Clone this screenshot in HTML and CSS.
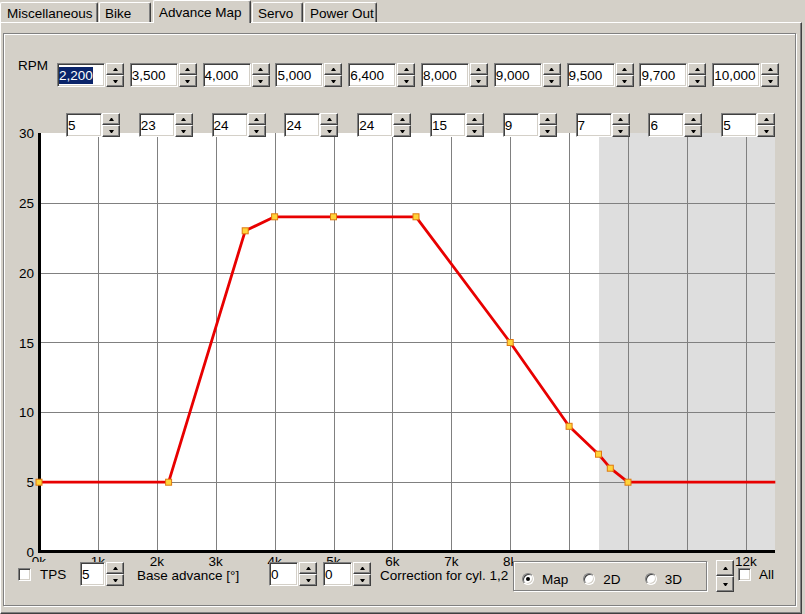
FILE: index.html
```html
<!DOCTYPE html>
<html lang="en">

<head>
  <meta charset="UTF-8">
  <title>Advance Map</title>
  <link rel="stylesheet" href="styles.css">
</head>

<body>
  <div class="tabs">
    <div class="tab tab-misc">Miscellaneous</div>
    <div class="tab tab-bike">Bike</div>
    <div class="tab tab-active">Advance Map</div>
    <div class="tab tab-servo">Servo</div>
    <div class="tab tab-power">Power Out</div>
  </div>

  <div class="page">
    <div class="group">
      <div class="rpm-row">
        <span class="rpm-label">RPM</span>
        <div class="rpm-grid" id="rpmGrid"></div>
      </div>

      <div class="advance-grid" id="advanceGrid"></div>

      <svg class="chart" id="chart" width="791" height="444" viewBox="4 126 791 444"></svg>

      <div class="bottom-row">
        <label class="check tps"><span class="box"></span>TPS</label>
        <div class="spin spin-base">
          <span class="field">5</span>
          <span class="updown"><span class="btn"><i class="arrow up"></i></span><span class="btn"><i class="arrow down"></i></span></span>
        </div>
        <span class="caption caption-base">Base advance [°]</span>
        <div class="spin spin-corr">
          <span class="field">0</span>
          <span class="updown"><span class="btn"><i class="arrow up"></i></span><span class="btn"><i class="arrow down"></i></span></span>
        </div>
        <div class="spin spin-corr spin-corr2">
          <span class="field">0</span>
          <span class="updown"><span class="btn"><i class="arrow up"></i></span><span class="btn"><i class="arrow down"></i></span></span>
        </div>
        <span class="caption caption-corr">Correction for cyl. 1,2</span>
        <div class="view-group">
          <div class="view-frame">
            <label class="radio-item"><span class="radio checked"></span>Map</label>
            <label class="radio-item"><span class="radio"></span>2D</label>
            <label class="radio-item"><span class="radio"></span>3D</label>
          </div>
        </div>
        <span class="updown updown-tall"><span class="btn"><i class="arrow up"></i></span><span class="btn"><i class="arrow down"></i></span></span>
        <label class="check all"><span class="box"></span>All</label>
      </div>
    </div>
  </div>

  <script>
    const rpm = [2200, 3500, 4000, 5000, 6400, 8000, 9000, 9500, 9700, 10000];
    const advance = [5, 23, 24, 24, 24, 15, 9, 7, 6, 5];
    const shadeFrom = 9500;

    const updownHtml = '<span class="updown"><span class="btn"><i class="arrow up"></i></span>' +
      '<span class="btn"><i class="arrow down"></i></span></span>';

    function spinner(value, cls) {
      const el = document.createElement('div');
      el.className = 'spin ' + cls;
      el.innerHTML = `<span class="field">${value}</span>` + updownHtml;
      return el;
    }

    const rpmGrid = document.getElementById('rpmGrid');
    const advanceGrid = document.getElementById('advanceGrid');
    rpm.forEach((r, i) => {
      const text = r.toLocaleString('en-US');
      rpmGrid.appendChild(spinner(i === 0 ? `<span class="sel">${text}</span>` : text, 'spin-rpm'));
      advanceGrid.appendChild(spinner(advance[i], 'spin-adv'));
    });

    // chart, drawn in page pixels (viewBox starts at the group's inner corner)
    const svg = document.getElementById('chart');
    const NS = 'http://www.w3.org/2000/svg';
    const plotL = 39, plotR = 775, plotT = 133, plotB = 552;
    const pxPerK = 58.9, pxPerDeg = 13.967;
    const sx = r => plotL + r / 1000 * pxPerK;
    const sy = d => plotB - d * pxPerDeg;

    function add(tag, attrs, text) {
      const el = document.createElementNS(NS, tag);
      for (const k in attrs) el.setAttribute(k, attrs[k]);
      if (text !== undefined) el.textContent = text;
      svg.appendChild(el);
      return el;
    }

    add('rect', { x: plotL, y: plotT, width: plotR - plotL, height: plotB - plotT, fill: '#fff' });
    const shadeX = Math.round(sx(shadeFrom));
    add('rect', { x: shadeX, y: plotT, width: plotR - shadeX, height: plotB - plotT, fill: '#dedede' });

    for (let k = 1; k <= 12; k++) {
      const x = Math.round(sx(k * 1000)) + 0.5;
      add('line', { x1: x, y1: plotT, x2: x, y2: plotB, class: 'grid' });
    }
    for (let d = 5; d < 30; d += 5) {
      const y = Math.round(sy(d)) + 0.5;
      add('line', { x1: plotL, y1: y, x2: plotR, y2: y, class: 'grid' });
    }

    add('rect', { x: 38, y: plotT, width: 3, height: plotB - plotT + 1, fill: '#000' });
    add('rect', { x: 38, y: 550, width: plotR - 38, height: 3, fill: '#000' });

    const points = [[0, 5], ...rpm.map((r, i) => [r, advance[i]])];
    const line = [...points, [12500, 5]].map(([r, d]) => `${sx(r).toFixed(1)},${sy(d).toFixed(1)}`).join(' ');
    add('polyline', { points: line, class: 'curve' });
    points.forEach(([r, d]) => {
      add('rect', { x: (sx(r) - 3).toFixed(1), y: (sy(d) - 3).toFixed(1), width: 6, height: 6, class: 'marker' });
    });

    for (let d = 0; d <= 30; d += 5) {
      add('text', { x: 34, y: (sy(d) + 5).toFixed(1), 'text-anchor': 'end' }, d);
    }
    for (let k = 0; k <= 12; k++) {
      add('text', { x: sx(k * 1000).toFixed(1), y: 566, 'text-anchor': 'middle' }, k + 'k');
    }
  </script>
</body>

</html>
```

FILE: styles.css
```css
body {
  margin: 0;
  background: #d4d0c8;
  font: 13.5px "Liberation Sans", Arial, sans-serif;
  color: #000;
}

/* tab strip */
.tabs {
  display: flex;
  align-items: flex-end;
  height: 22px;
}

.tab {
  box-sizing: border-box;
  height: 20px;
  margin-left: 1px;
  padding: 3px 0 0 5px;
  line-height: 15px;
  white-space: nowrap;
  background: #d4d0c8;
  border-top: 1px solid #fff;
  border-left: 1px solid #fff;
  border-right: 1px solid #404040;
  border-radius: 2px 2px 0 0;
  box-shadow: inset -1px 0 #808080;
}

.tab-misc {
  width: 98px;
  margin-left: 0;
  padding-left: 6px;
}

.tab-bike {
  width: 52px;
}

.tab-active {
  position: relative;
  z-index: 1;
  width: 98px;
  height: 23px;
  margin: 0 0 -1px 2px;
  padding-top: 4px;
}

.tab-servo {
  width: 51px;
}

.tab-power {
  width: 73px;
}

.page {
  box-sizing: border-box;
  width: 802px;
  height: 592px;
  border: 1px solid;
  border-color: #fff #404040 #404040 #fff;
  box-shadow: inset -1px -1px #808080;
}

.group {
  box-sizing: border-box;
  width: 793px;
  height: 573px;
  margin: 10px 0 0 2px;
  border: 1px solid #808080;
  box-shadow: inset 1px 1px #fff, 1px 1px #fff;
}

/* spin edits */
.spin {
  display: flex;
  height: 24px;
}

.field {
  box-sizing: border-box;
  display: flex;
  align-items: center;
  height: 24px;
  padding-left: 1px;
  overflow: hidden;
  white-space: nowrap;
  background: #fff;
  border: 1px solid;
  border-color: #808080 #fff #fff #808080;
  box-shadow: inset 1px 1px #404040, inset -1px -1px #d4d0c8;
}

.sel {
  padding: 1px 0;
  background: #0a246a;
  color: #fff;
}

.updown {
  display: flex;
  flex-direction: column;
  width: 18px;
  margin-left: 1px;
}

.btn {
  box-sizing: border-box;
  flex: 1;
  display: flex;
  align-items: center;
  justify-content: center;
  background: #d4d0c8;
  border: 1px solid;
  border-color: #fff #404040 #404040 #fff;
  box-shadow: inset -1px -1px #808080;
}

.arrow {
  width: 1px;
  height: 0;
  border-left: 2px solid transparent;
  border-right: 2px solid transparent;
}

.arrow.up {
  border-bottom: 3px solid #000;
}

.arrow.down {
  border-top: 3px solid #000;
}

.spin-rpm .field {
  width: 48px;
}

.spin-adv .field {
  width: 36px;
}

.spin-adv .updown {
  margin-left: 0;
}

.rpm-row {
  display: flex;
  align-items: flex-start;
  margin: 24px 0 0 14px;
}

.rpm-label {
  width: 39px;
  line-height: 15px;
}

.rpm-grid,
.advance-grid {
  display: grid;
  grid-template-columns: repeat(10, 72.8px);
}

.rpm-grid {
  margin-top: 5px;
}

.advance-grid {
  position: relative;
  z-index: 1;
  margin: 26px 0 -11px 62px;
}

/* chart */
.chart {
  display: block;
}

.chart text {
  font-family: "Liberation Sans", Arial, sans-serif;
  font-size: 13.5px;
  fill: #000;
}

.grid {
  stroke: #808080;
  stroke-width: 1;
}

.curve {
  fill: none;
  stroke: #e80000;
  stroke-width: 2.8;
  stroke-linejoin: round;
}

.marker {
  fill: #ffd43a;
  stroke: #e07810;
  stroke-width: 1;
}

/* bottom controls */
.bottom-row {
  position: relative;
  z-index: 1;
  display: flex;
  align-items: flex-start;
  height: 38px;
  margin-top: -16px;
}

.check {
  display: flex;
  align-items: center;
  height: 24px;
  gap: 9px;
}

.box {
  box-sizing: border-box;
  flex: none;
  width: 13px;
  height: 13px;
  background: #fff;
  border: 1px solid;
  border-color: #808080 #fff #fff #808080;
  box-shadow: inset 1px 1px #404040, inset -1px -1px #d4d0c8;
}

.tps {
  width: 58px;
  margin: 8px 0 0 14px;
  background: #d4d0c8;
}

.spin-base {
  margin: 8px 0 0 4px;
}

.spin-base .field {
  width: 25px;
}

.caption {
  margin-top: 14px;
  line-height: 15px;
  white-space: nowrap;
}

.caption-base {
  width: 132px;
  margin-left: 13px;
}

.spin-corr {
  margin-top: 8px;
}

.spin-corr .field {
  width: 29px;
}

.spin-corr2 {
  margin-left: 6px;
}

.caption-corr {
  width: 133px;
  margin-left: 9px;
}

.view-group {
  box-sizing: border-box;
  width: 195px;
  height: 38px;
  padding-top: 7px;
  background: #d4d0c8;
}

.view-frame {
  box-sizing: border-box;
  display: flex;
  align-items: center;
  width: 194px;
  height: 30px;
  padding: 6px 0 0 8px;
  border: 1px solid #808080;
  box-shadow: inset 1px 1px #fff, 1px 1px #fff;
}

.radio-item {
  display: flex;
  align-items: center;
  gap: 8px;
  width: 62px;
  line-height: 15px;
}

.radio {
  box-sizing: border-box;
  flex: none;
  display: flex;
  align-items: center;
  justify-content: center;
  width: 12px;
  height: 12px;
  border-radius: 50%;
  background: #fff;
  border: 1px solid;
  border-color: #808080 #fff #fff #808080;
  box-shadow: inset 1px 1px #404040, inset -1px -1px #d4d0c8;
}

.radio.checked::after {
  content: '';
  width: 4px;
  height: 4px;
  border-radius: 50%;
  background: #000;
}

.updown-tall {
  height: 32px;
  margin: 6px 0 0 8px;
}

.all {
  gap: 8px;
  margin: 8px 0 0 4px;
}
```
